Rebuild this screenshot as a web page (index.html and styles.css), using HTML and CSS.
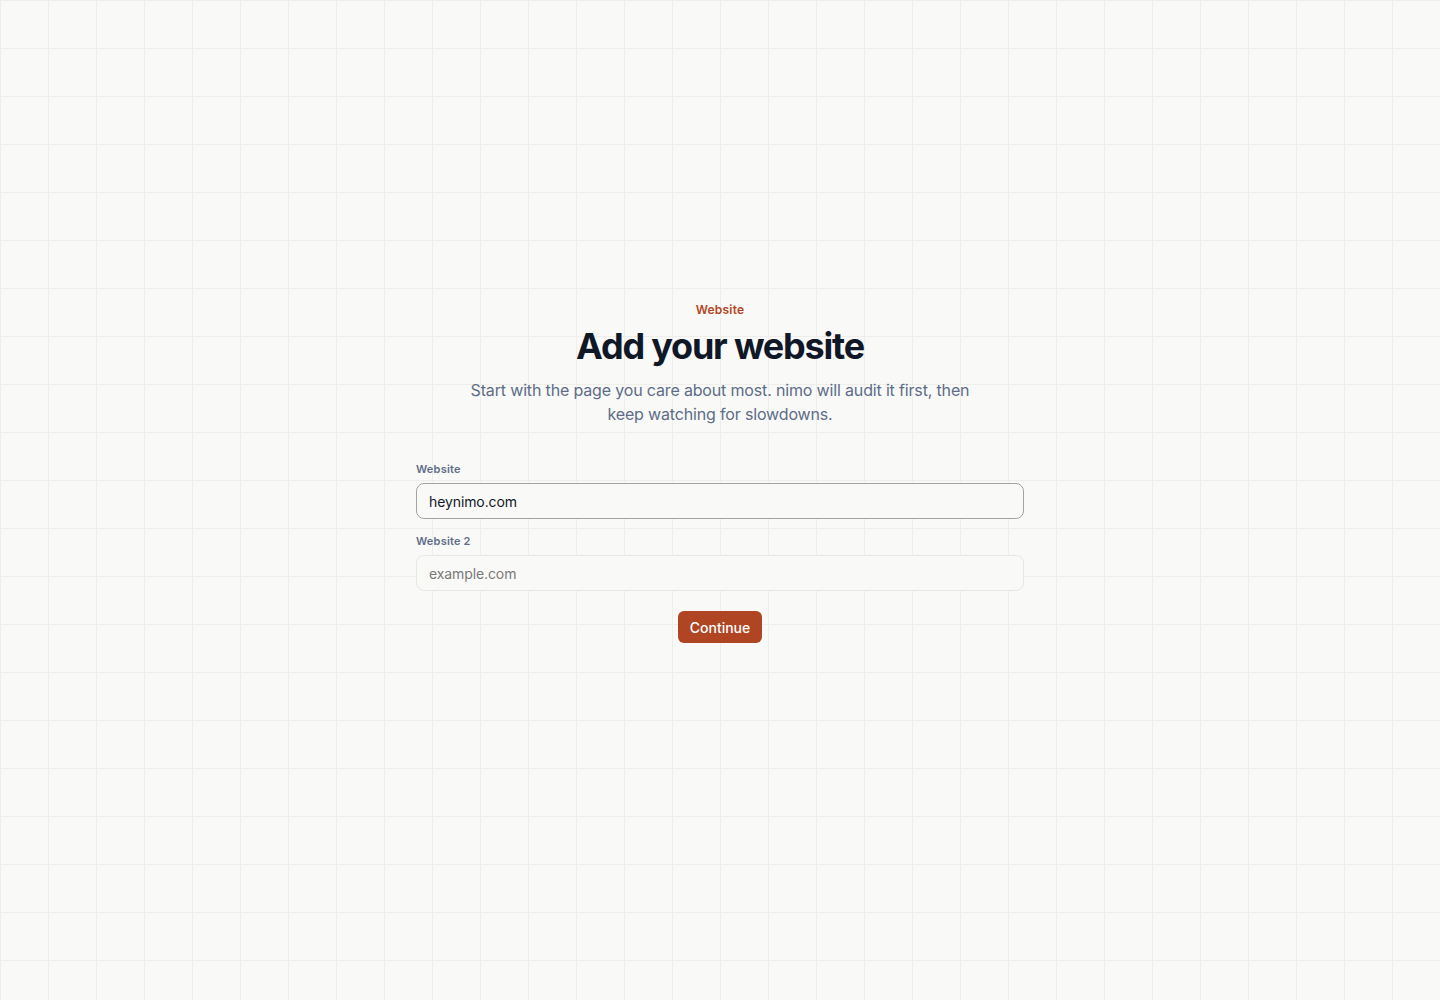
FILE: index.html
```html
<!DOCTYPE html>
<html lang="en">
<head>
<meta charset="utf-8">
<title>Add your website</title>
<link rel="stylesheet" href="styles.css">
</head>
<body>
<main class="page">
  <section class="panel">
    <div class="eyebrow">Website</div>
    <h1 class="title">Add your website</h1>
    <p class="lead">Start with the page you care about most. nimo will audit it first, then keep watching for slowdowns.</p>
    <form class="form">
      <label class="field">
        <span class="label">Website</span>
        <input class="input input-active" type="text" value="heynimo.com">
      </label>
      <label class="field">
        <span class="label">Website 2</span>
        <input class="input" type="text" placeholder="example.com">
      </label>
      <div class="actions">
        <button class="button" type="button">Continue</button>
      </div>
    </form>
  </section>
</main>
</body>
</html>
```
FILE: styles.css
```css
* { box-sizing: border-box; }
html, body { margin: 0; padding: 0; }
body {
  min-height: 100vh;
  background-color: #f9f9f7;
  background-image:
    linear-gradient(to right, #eeeeeb 1px, transparent 1px),
    linear-gradient(to bottom, #eeeeeb 1px, transparent 1px);
  background-size: 48px 48px;
  font-family: Inter, "Liberation Sans", sans-serif;
  color: #0f172a;
}
.page {
  display: flex;
  justify-content: center;
  padding-top: 302px;
}
.panel {
  width: 608px;
  display: flex;
  flex-direction: column;
  align-items: center;
  text-align: center;
}
.eyebrow {
  font-size: 12px;
  line-height: 16px;
  font-weight: 600;
  color: #b4461f;
  letter-spacing: 0.2px;
}
.title {
  margin: 6px 0 0;
  font-size: 36px;
  line-height: 44px;
  font-weight: 700;
  letter-spacing: -1.2px;
  color: #101828;
}
.lead {
  margin: 10px 0 0;
  max-width: 510px;
  font-size: 16px;
  line-height: 24px;
  color: #5d6d87;
  letter-spacing: -0.16px;
}
.form {
  width: 100%;
  margin-top: 35px;
  display: flex;
  flex-direction: column;
  gap: 14px;
  text-align: left;
}
.field {
  display: flex;
  flex-direction: column;
  gap: 6px;
}
.label {
  font-size: 11px;
  line-height: 16px;
  font-weight: 600;
  color: #5d6d87;
  letter-spacing: 0.2px;
}
.input {
  height: 36px;
  width: 100%;
  padding: 0 12px;
  border: 1px solid #e6e6e3;
  border-radius: 8px;
  background: #f9f9f7;
  font-family: inherit;
  font-size: 14px;
  letter-spacing: -0.1px;
  color: #101828;
  outline: none;
}
.input::placeholder { color: #7a7a7a; }
.input-active {
  border-color: #a3a3a3;
}
.actions {
  display: flex;
  justify-content: center;
  padding-top: 6px;
}
.button {
  height: 32px;
  padding: 0 12px;
  border: 0;
  border-radius: 6px;
  background: #b04523;
  color: #ffffff;
  font-family: inherit;
  font-size: 14px;
  font-weight: 500;
  cursor: pointer;
}
```
